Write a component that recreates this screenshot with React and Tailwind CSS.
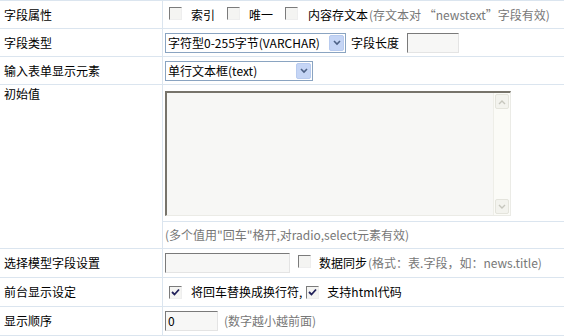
import React from "react";

const line = "border-[#dbe5ef]";

function Check({ checked }) {
  return (
    <span className="inline-flex h-[13px] w-[13px] shrink-0 items-center justify-center border border-t-[#7b7b7b] border-l-[#7b7b7b] border-r-[#eeeeee] border-b-[#eeeeee] bg-[#f4f4f2]">
      {checked && (
        <svg width="9" height="9" viewBox="0 0 9 9">
          <path d="M1 4 L3.5 6.5 L8 1.5" stroke="#21215a" strokeWidth="1.8" fill="none" />
        </svg>
      )}
    </span>
  );
}

function Select({ text, width }) {
  return (
    <div
      className={`flex h-[20px] items-center border border-[#8aa4c1] bg-white ${width}`}
    >
      <span className="flex-1 pl-[2px] text-[12px] leading-none text-black">{text}</span>
      <span className="mr-[1px] flex h-[16px] w-[15px] items-center justify-center rounded-[2px] border border-[#b8cbef] bg-[#c5d5f5]">
        <svg width="8" height="6" viewBox="0 0 8 6">
          <path d="M1 1 L4 4 L7 1" stroke="#4d6185" strokeWidth="1.6" fill="none" />
        </svg>
      </span>
    </div>
  );
}

function Input({ width, value }) {
  return (
    <div
      className={`flex h-[20px] items-center border border-t-[#7a7a7a] border-l-[#7a7a7a] border-r-[#e4e4e4] border-b-[#e4e4e4] bg-[#f7f7f6] pl-[2px] text-[12px] text-black ${width}`}
    >
      {value}
    </div>
  );
}

function Row({ label, h = "h-[28px]", children }) {
  return (
    <div className={`grid grid-cols-[163px_1fr] border-b ${line} ${h}`}>
      <div className={`flex items-center border-r ${line} pl-[4px] text-[12px] text-black`}>
        {label}
      </div>
      <div className="flex items-center pl-[2px] text-[12px] text-black">{children}</div>
    </div>
  );
}

export default function App() {
  return (
    <div
      className="h-[336px] w-[564px] bg-white"
      style={{ fontFamily: '"Noto Sans CJK SC", "Liberation Sans", sans-serif' }}
    >
      <div className={`border-t ${line}`}>
        <Row label="字段属性">
          <span className="ml-[4px]"><Check /></span>
          <span className="ml-[9px]">索引</span>
          <span className="ml-[12px]"><Check /></span>
          <span className="ml-[9px]">唯一</span>
          <span className="ml-[12px]"><Check /></span>
          <span className="ml-[10px]">内容存文本</span>
          <span className="ml-[1px] text-[#777]">(存文本对 “newstext”字段有效)</span>
        </Row>
        <Row label="字段类型">
          <Select text="字符型0-255字节(VARCHAR)" width="w-[181px]" />
          <span className="ml-[5px]">字段长度</span>
          <span className="ml-[8px]"><Input width="w-[52px]" /></span>
        </Row>
        <Row label="输入表单显示元素">
          <Select text="单行文本框(text)" width="w-[148px]" />
        </Row>

        <div className={`grid grid-cols-[163px_1fr] border-b ${line} h-[164px]`}>
          <div className={`border-r ${line} pl-[4px] pt-[2px] text-[12px] leading-[14px] text-black`}>
            初始值
          </div>
          <div className="flex flex-col">
            <div className="h-[136px] pl-[2px] pt-[6px]">
              <div className="flex h-[125px] w-[346px] border border-t-[#77746b] border-l-[#77746b] border-r-[#ebebe6] border-b-[#ebebe6] border-t-2 border-l-2 bg-[#f7f7f5]">
                <div className="flex-1" />
                <div className="flex w-[17px] flex-col justify-between border-l border-[#eeeee8] bg-[#fbfbf7] p-[1px]">
                  <span className="flex h-[15px] items-center justify-center rounded-[2px] border border-[#e4e4dc] bg-[#f3f3ee]">
                    <svg width="8" height="6" viewBox="0 0 8 6">
                      <path d="M1 5 L4 2 L7 5" stroke="#c6c6bd" strokeWidth="1.4" fill="none" />
                    </svg>
                  </span>
                  <span className="flex h-[15px] items-center justify-center rounded-[2px] border border-[#e4e4dc] bg-[#f3f3ee]">
                    <svg width="8" height="6" viewBox="0 0 8 6">
                      <path d="M1 1 L4 4 L7 1" stroke="#c6c6bd" strokeWidth="1.4" fill="none" />
                    </svg>
                  </span>
                </div>
              </div>
            </div>
            <div className={`flex flex-1 items-center border-t ${line} pl-[2px] text-[12px] text-[#777]`}>
              (多个值用"回车"格开,对radio,select元素有效)
            </div>
          </div>
        </div>

        <Row label="选择模型字段设置" h="h-[29px]">
          <Input width="w-[125px]" />
          <span className="ml-[8px]"><Check /></span>
          <span className="ml-[8px]">数据同步</span>
          <span className="ml-[1px] text-[#777]">(格式：表.字段，如：news.title)</span>
        </Row>
        <Row label="前台显示设定" h="h-[29px]">
          <span className="ml-[4px]"><Check checked /></span>
          <span className="ml-[9px]">将回车替换成换行符,</span>
          <span className="ml-[4px]"><Check checked /></span>
          <span className="ml-[8px]">支持html代码</span>
        </Row>
        <Row label="显示顺序" h="h-[29px]">
          <Input width="w-[53px]" value="0" />
          <span className="ml-[6px] text-[#777]">(数字越小越前面)</span>
        </Row>
      </div>
    </div>
  );
}
